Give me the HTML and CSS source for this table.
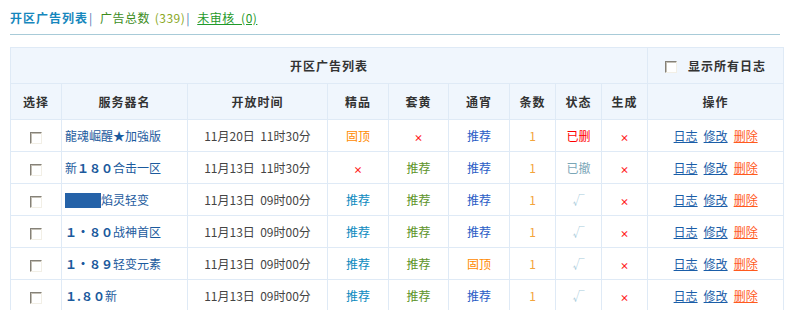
FILE: index.html
```html
<!DOCTYPE html>
<html lang="zh-CN">
<head>
  <meta charset="UTF-8">
  <title>开区广告列表</title>
  <link rel="stylesheet" href="styles.css">
</head>
<body>
  <div class="topnav">
    <b class="nav-title">开区广告列表</b><span class="sep">|</span>
    <span class="nav-total">广告总数</span> <span class="nav-num">(339)</span><span class="sep">|</span>
    <a href="#" class="nav-pending">未审核&nbsp; (0)</a>
  </div>
  <div class="rule"></div>

  <table class="adlist">
    <colgroup>
      <col style="width:51px"><col style="width:126px"><col style="width:140px">
      <col style="width:61px"><col style="width:60px"><col style="width:61px">
      <col style="width:46px"><col style="width:46px"><col style="width:46px">
      <col style="width:136px">
    </colgroup>
    <thead>
      <tr class="head-top">
        <th colspan="9">开区广告列表</th>
        <th><span class="chk"></span>显示所有日志</th>
      </tr>
      <tr class="head-cols">
        <th>选择</th><th>服务器名</th><th>开放时间</th><th>精品</th><th>套黄</th>
        <th>通宵</th><th>条数</th><th>状态</th><th>生成</th><th>操作</th>
      </tr>
    </thead>
    <tbody>
      <tr>
        <td><span class="chk"></span></td>
        <td class="name"><a href="#">龍魂崛醒★加強版</a></td>
        <td class="time">11月20日&nbsp; 11时30分</td>
        <td class="top">固顶</td>
        <td><span class="no">×</span></td>
        <td class="rec-c">推荐</td>
        <td class="count">1</td>
        <td class="del">已删</td>
        <td><span class="no">×</span></td>
        <td class="ops"><a href="#">日志</a><a href="#">修改</a><a href="#" class="op-del">删除</a></td>
      </tr>
      <tr>
        <td><span class="chk"></span></td>
        <td class="name"><a href="#">新<span class="fw">１８０</span>合击一区</a></td>
        <td class="time">11月13日&nbsp; 11时30分</td>
        <td><span class="no">×</span></td>
        <td class="rec-b">推荐</td>
        <td class="rec-c">推荐</td>
        <td class="count">1</td>
        <td class="undo">已撤</td>
        <td><span class="no">×</span></td>
        <td class="ops"><a href="#">日志</a><a href="#">修改</a><a href="#" class="op-del">删除</a></td>
      </tr>
      <tr>
        <td><span class="chk"></span></td>
        <td class="name"><a href="#"><span class="mask"></span>焰灵轻变</a></td>
        <td class="time">11月13日&nbsp; 09时00分</td>
        <td class="rec-a">推荐</td>
        <td class="rec-b">推荐</td>
        <td class="rec-c">推荐</td>
        <td class="count">1</td>
        <td class="ok">√</td>
        <td><span class="no">×</span></td>
        <td class="ops"><a href="#">日志</a><a href="#">修改</a><a href="#" class="op-del">删除</a></td>
      </tr>
      <tr>
        <td><span class="chk"></span></td>
        <td class="name"><a href="#"><span class="fw">１·８０</span>战神首区</a></td>
        <td class="time">11月13日&nbsp; 09时00分</td>
        <td class="rec-a">推荐</td>
        <td class="rec-b">推荐</td>
        <td class="rec-c">推荐</td>
        <td class="count">1</td>
        <td class="ok">√</td>
        <td><span class="no">×</span></td>
        <td class="ops"><a href="#">日志</a><a href="#">修改</a><a href="#" class="op-del">删除</a></td>
      </tr>
      <tr>
        <td><span class="chk"></span></td>
        <td class="name"><a href="#"><span class="fw">１·８９</span>轻变元素</a></td>
        <td class="time">11月13日&nbsp; 09时00分</td>
        <td class="rec-a">推荐</td>
        <td class="rec-b">推荐</td>
        <td class="top">固顶</td>
        <td class="count">1</td>
        <td class="ok">√</td>
        <td><span class="no">×</span></td>
        <td class="ops"><a href="#">日志</a><a href="#">修改</a><a href="#" class="op-del">删除</a></td>
      </tr>
      <tr>
        <td><span class="chk"></span></td>
        <td class="name"><a href="#"><span class="fw">１.８０</span>新</a></td>
        <td class="time">11月13日&nbsp; 09时00分</td>
        <td class="rec-a">推荐</td>
        <td class="rec-b">推荐</td>
        <td class="rec-c">推荐</td>
        <td class="count">1</td>
        <td class="ok">√</td>
        <td><span class="no">×</span></td>
        <td class="ops"><a href="#">日志</a><a href="#">修改</a><a href="#" class="op-del">删除</a></td>
      </tr>
    </tbody>
  </table>
</body>
</html>
```

FILE: styles.css
```css
body {
  margin: 0;
  padding: 0 10px;
  background: #fff;
  color: #333;
  font-family: "Noto Sans CJK SC", "Liberation Sans", sans-serif;
  font-size: 12px;
}
a {
  text-decoration: underline;
}
.topnav {
  height: 34px;
  line-height: 36px;
  white-space: nowrap;
}
.nav-title {
  color: #1687bd;
  letter-spacing: 1px;
}
.sep {
  color: #4a78b5;
  margin: 0 5px 0 1px;
}
.nav-total {
  color: #3c8c1c;
  letter-spacing: 0.5px;
}
.nav-num {
  color: #8aa824;
  margin-left: 2px;
  letter-spacing: 0.5px;
}
.nav-pending {
  color: #1f9a2a;
  letter-spacing: 0.5px;
}
.rule {
  height: 1px;
  background: #a8cbd8;
  margin-bottom: 12px;
}
.adlist {
  width: 773px;
  table-layout: fixed;
  border-collapse: collapse;
  border: 1px solid #dfeaf6;
}
.adlist th,
.adlist td {
  border: 1px solid #dfeaf6;
  text-align: center;
  padding: 0;
  white-space: nowrap;
  overflow: hidden;
}
.adlist th {
  background: #f0f6fd;
  color: #333;
  font-weight: bold;
  letter-spacing: 1px;
  height: 35px;
}
.head-top th:last-child .chk {
  margin-right: 11px;
  vertical-align: -2px;
}
.adlist td {
  height: 31px;
}
.chk {
  display: inline-block;
  width: 10px;
  height: 10px;
  border: 1px solid;
  border-color: #858178 #f2efe6 #f2efe6 #858178;
  box-shadow: inset 1px 1px 0 #c4c0b6;
  background: #fff;
  vertical-align: middle;
}
.adlist td.name {
  text-align: left;
  padding-left: 3px;
}
.name a {
  color: #1b5a9d;
  text-decoration: none;
}
.fw {
  font-weight: bold;
}
.mask {
  display: inline-block;
  width: 36px;
  height: 15px;
  background: #2562a8;
  vertical-align: -3px;
}
.time {
  color: #444;
}
.top {
  color: #ff8a00;
}
.no {
  color: #ff1a1a;
  font-size: 9px;
  font-weight: bold;
}
.rec-a {
  color: #0c8ac0;
}
.rec-b {
  color: #5d9428;
}
.rec-c {
  color: #2a5cc6;
}
.count {
  color: #f3a43a;
}
.del {
  color: #ff0000;
}
.undo {
  color: #7aa6b7;
}
.ok {
  color: #a9cddc;
}
.ops a {
  color: #1b5ea8;
  margin: 0 3px;
}
.ops a.op-del {
  color: #ff5a1e;
}
```
